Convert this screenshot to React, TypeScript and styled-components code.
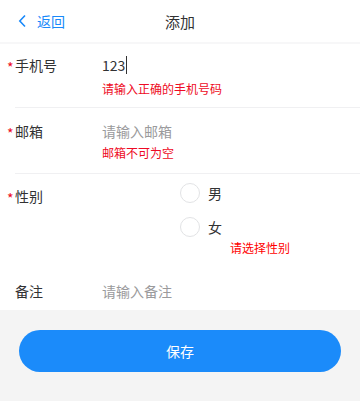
import React from 'react'
import styled, { createGlobalStyle } from 'styled-components'

const GlobalStyle = createGlobalStyle`
  html, body {
    margin: 0;
    padding: 0;
    background: #f4f4f4;
    font-family: "Noto Sans CJK SC", "Noto Sans", "Liberation Sans", sans-serif;
    -webkit-font-smoothing: antialiased;
  }
  * {
    box-sizing: border-box;
  }
`

const Page = styled.div`
  width: 360px;
  min-height: 401px;
  background: #f4f4f4;
`

const NavBar = styled.header`
  position: relative;
  display: flex;
  align-items: center;
  justify-content: center;
  height: 44px;
  background: #fff;
  border-bottom: 2px solid #f7f7f8;
`

const BackButton = styled.button`
  position: absolute;
  left: 16px;
  top: 0;
  bottom: 0;
  display: flex;
  align-items: center;
  gap: 7px;
  padding: 0;
  border: 0;
  background: none;
  color: #1989fa;
  font-family: inherit;
  font-size: 14px;
  cursor: pointer;
  svg {
    width: 14px;
    height: 14px;
  }
`

const Title = styled.h1`
  margin: 0;
  font-size: 15px;
  font-weight: 400;
  color: #323233;
`

const Form = styled.form`
  background: #fff;
`

const Field = styled.div<{ top: number; bottom: number; divider?: boolean }>`
  position: relative;
  display: flex;
  padding: ${({ top, bottom }) => `${top}px 15px ${bottom}px 15px`};
  &::after {
    content: '';
    display: ${({ divider }) => (divider ? 'block' : 'none')};
    position: absolute;
    left: 15px;
    right: 0;
    bottom: 0;
    height: 1px;
    background: #f0f0f2;
  }
`

const Label = styled.label<{ required?: boolean }>`
  position: relative;
  width: 87px;
  flex-shrink: 0;
  font-size: 14px;
  line-height: 24px;
  color: #323233;
  &::before {
    content: '*';
    display: ${({ required }) => (required ? 'block' : 'none')};
    position: absolute;
    left: -8px;
    top: 2px;
    color: #ee0a24;
    font-size: 14px;
  }
`

const Control = styled.div`
  flex: 1;
  display: flex;
  flex-direction: column;
`

const Value = styled.div<{ placeholder?: boolean }>`
  display: flex;
  align-items: center;
  font-size: 14px;
  line-height: 24px;
  height: 24px;
  color: ${({ placeholder }) => (placeholder ? '#9a9a9c' : '#323233')};
`

const Caret = styled.span`
  width: 1px;
  height: 18px;
  margin-left: 1px;
  background: #323233;
`

const ErrorText = styled.div<{ gap: number; bright?: boolean; indent?: number }>`
  margin-top: ${({ gap }) => gap}px;
  margin-left: ${({ indent }) => indent ?? 0}px;
  font-size: 12px;
  line-height: 16px;
  color: ${({ bright }) => (bright ? '#ff0000' : '#ee0a24')};
`

const RadioGroup = styled.div`
  display: flex;
  flex-direction: column;
  gap: 14px;
  margin-left: 78px;
  margin-top: -1px;
`

const Radio = styled.div`
  display: flex;
  align-items: center;
  gap: 8px;
  height: 20px;
  font-size: 14px;
  color: #323233;
`

const RadioIcon = styled.span`
  width: 20px;
  height: 20px;
  border: 1px solid #e2e3e5;
  border-radius: 50%;
`

const Footer = styled.div`
  padding: 20px 19px;
`

const SaveButton = styled.button`
  display: block;
  width: 100%;
  height: 42px;
  border: 0;
  border-radius: 21px;
  background: #1b8bfa;
  color: #fff;
  font-family: inherit;
  font-size: 14px;
  cursor: pointer;
`

const App = () => (
  <Page>
    <GlobalStyle />
    <NavBar>
      <BackButton type="button">
        <svg viewBox="0 0 14 14" fill="none" stroke="currentColor" strokeWidth="1.6">
          <path d="M9 1.5 L3.8 7 L9 12.5" />
        </svg>
        返回
      </BackButton>
      <Title>添加</Title>
    </NavBar>

    <Form>
      <Field top={9} bottom={11} divider>
        <Label required>手机号</Label>
        <Control>
          <Value>
            123
            <Caret />
          </Value>
          <ErrorText gap={4}>请输入正确的手机号码</ErrorText>
        </Control>
      </Field>

      <Field top={11} bottom={13} divider>
        <Label required>邮箱</Label>
        <Control>
          <Value placeholder>请输入邮箱</Value>
          <ErrorText gap={2}>邮箱不可为空</ErrorText>
        </Control>
      </Field>

      <Field top={10} bottom={10}>
        <Label required>性别</Label>
        <Control>
          <RadioGroup>
            <Radio>
              <RadioIcon />
              男
            </Radio>
            <Radio>
              <RadioIcon />
              女
            </Radio>
          </RadioGroup>
          <ErrorText gap={3} indent={128} bright>
            请选择性别
          </ErrorText>
        </Control>
      </Field>

      <Field top={13} bottom={7}>
        <Label>备注</Label>
        <Control>
          <Value placeholder>请输入备注</Value>
        </Control>
      </Field>
    </Form>

    <Footer>
      <SaveButton type="button">保存</SaveButton>
    </Footer>
  </Page>
)

export default App
